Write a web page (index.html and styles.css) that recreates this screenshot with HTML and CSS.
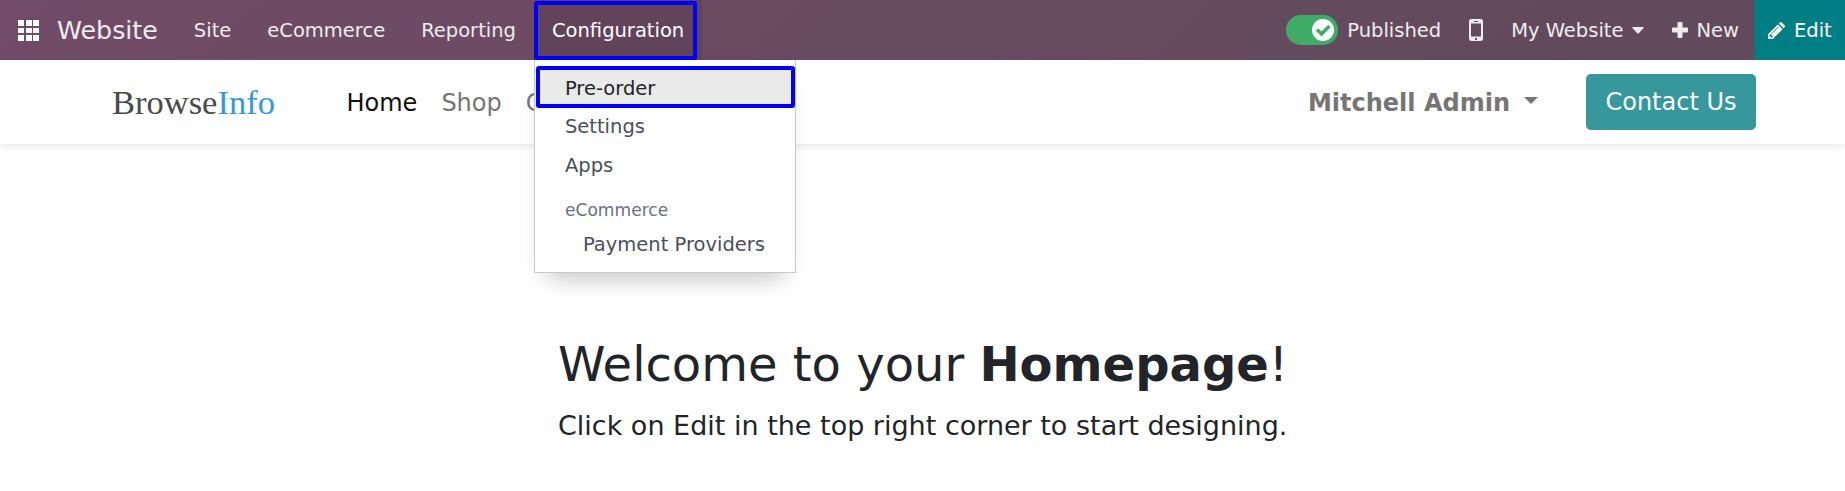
FILE: index.html
```html
<!DOCTYPE html>
<html lang="en">
<head>
<meta charset="utf-8">
<title>Website</title>
<link rel="stylesheet" href="styles.css">
</head>
<body>
<nav class="topbar">
  <svg class="apps" width="21" height="21" viewBox="0 0 21 21" fill="#fff"><path d="M0 0h6v6H0zM8 0h6v6H8zM15 0h6v6h-6zM0 8h6v5H0zM8 8h6v5H8zM15 8h6v5h-6zM0 15h6v6H0zM8 15h6v6H8zM15 15h6v6h-6z"/></svg>
  <span class="brand">Website</span>
  <a class="entry">Site</a>
  <a class="entry">eCommerce</a>
  <a class="entry">Reporting</a>
  <div class="entry open"><span>Configuration</span>
    <i class="mark mark-tab"></i>
    <div class="menu">
      <a class="item active">Pre-order<i class="mark mark-item"></i></a>
      <a class="item">Settings</a>
      <a class="item">Apps</a>
      <div class="group">eCommerce</div>
      <a class="item nested">Payment Providers</a>
    </div>
  </div>
  <div class="systray">
    <span class="switch"><svg width="22" height="22" viewBox="0 0 22 22"><circle cx="11" cy="11" r="11" fill="#fff"/><path d="M5 10.5l4.5 4.5 8-8" fill="none" stroke="#40ad67" stroke-width="3.5"/></svg></span>
    <span class="published">Published</span>
    <svg class="mobile" width="14" height="22" viewBox="0 0 14 22"><path fill="#efecee" fill-rule="evenodd" d="M2.5 0h9Q14 0 14 2.500v17Q14 22 11.500 22h-9Q0 22 0 19.500v-17Q0 0 2.500 0zM2 4.500v13h10v-13zM5 2v1h4V2zM6 19v2h2v-2z"/></svg>
    <span class="site">My Website</span>
    <svg class="caret" width="12" height="7" viewBox="0 0 12 7"><path fill="#efecee" d="M.8 0h10.400q1 0 .4 1L6.700 6.300q-.7.700-1.400 0L.4 1Q-.2 0 .8 0z"/></svg>
    <svg class="plus" width="16" height="16" viewBox="0 0 16 16"><path fill="#efecee" d="M6.500 0h3q1 0 1 1v4.500H15q1 0 1 1v3q0 1-1 1h-4.500V15q0 1-1 1h-3q-1 0-1-1v-4.500H1q-1 0-1-1v-3q0-1 1-1h4.500V1q0-1 1-1z"/></svg>
    <span class="new">New</span>
    <a class="edit"><svg width="17" height="17" viewBox="0 0 17 17"><path fill="#fff" fill-rule="evenodd" d="M0 17v-4.800L9.800 2.400l4.800 4.800L4.800 17zM1.500 13v1.200h1.300v1.300H4l1-1L2.500 12zM3.500 11.200l.5.500 6.300-6.300-.5-.5zM10.800 1.400l.9-.9q1-1 2 0l2.800 2.800q1 1 0 2l-.9.900z"/></svg>Edit</a>
  </div>
</nav>
<header class="header">
  <a class="logo">Browse<span>Info</span></a>
  <a class="link current">Home</a>
  <a class="link">Shop</a>
  <a class="link">C</a>
  <a class="user">Mitchell Admin<svg width="14" height="7" viewBox="0 0 14 7"><path fill="#757575" d="M0 0h14L7 7z"/></svg></a>
  <a class="contact">Contact Us</a>
</header>
<main class="hero">
  <div>
    <h1>Welcome to your <b>Homepage</b>!</h1>
    <p>Click on Edit in the top right corner to start designing.</p>
  </div>
</main>
</body>
</html>
```
FILE: styles.css
```css
* { box-sizing: border-box; }
body {
  margin: 0;
  height: 491px;
  overflow: hidden;
  background: #fff;
  color: #212529;
  font-family: "DejaVu Sans", sans-serif;
  white-space: nowrap;
}
svg { flex: none; }
.topbar {
  position: relative;
  z-index: 2;
  display: flex;
  align-items: center;
  height: 60px;
  padding-left: 18px;
  background: linear-gradient(135deg, #714b67, #5f4a5a);
  color: #efecee;
  font-size: 19.500px;
}
.brand { margin: 0 18px 0 18px; font-size: 25.300px; }
.entry {
  display: flex;
  align-items: center;
  height: 60px;
  padding: 0 18px;
}
.open {
  position: relative;
  width: 168px;
  background: #62445a;
  color: #fff;
}
.mark {
  position: absolute;
  border: 4px solid #0000fe;
  border-radius: 3px;
}
.mark-tab { left: 0; top: 1px; width: 163px; height: 59px; }
.menu {
  position: absolute;
  left: 0;
  top: 60px;
  width: 262px;
  height: 213px;
  padding-top: 9px;
  border: 1px solid #c6c9d4;
  border-top: 0;
  background: #fff;
  color: #4a4f59;
  box-shadow: 0 20px 22px -14px rgba(0, 0, 0, .2), 0 4px 24px rgba(0, 0, 0, .03);
}
.item {
  position: relative;
  display: flex;
  align-items: center;
  height: 38.500px;
  padding-left: 30px;
}
.active { background: #eaeaea; color: #212529; }
.mark-item { left: 1px; top: -3px; width: 259px; height: 42px; }
.group {
  height: 43px;
  padding: 13px 0 0 30px;
  color: #6b7080;
  font-size: 17.100px;
  line-height: 24px;
}
.nested { height: 34px; padding-left: 48px; }
.systray {
  display: flex;
  align-items: center;
  height: 60px;
  margin-left: auto;
}
.switch {
  display: flex;
  align-items: center;
  justify-content: flex-end;
  width: 52px;
  height: 30px;
  padding-right: 4px;
  border-radius: 15px;
  background: #40ad67;
}
.published { margin: 0 28px 0 9px; }
.mobile { margin-right: 28px; }
.caret { margin: 0 28px 0 9px; }
.new { margin: 0 15px 0 8px; }
.edit {
  display: flex;
  align-items: center;
  gap: 9px;
  width: 91px;
  height: 60px;
  padding-left: 14px;
  background: #017e84;
  color: #fff;
}
.header {
  display: flex;
  align-items: center;
  height: 84px;
  padding: 0 89px 0 112px;
  background: #fff;
  box-shadow: 0 2px 8px rgba(0, 0, 0, .1);
  color: #757575;
  font-size: 24px;
}
.logo {
  width: 234.500px;
  color: #4a4a4a;
  font: 34.500px "Liberation Serif", serif;
}
.logo span { color: #3498e0; }
.link { margin-right: 24px; padding-top: 2px; }
.current { color: #121212; }
.user {
  display: flex;
  align-items: center;
  gap: 14px;
  margin: 0 48px 0 auto;
  padding-top: 2px;
  font-weight: bold;
}
.user svg { margin-bottom: 5px; }
.contact {
  width: 170px;
  height: 56px;
  border-radius: 5px;
  background: #36979c;
  color: #fff;
  line-height: 57px;
  text-align: center;
}
.hero { display: flex; justify-content: center; padding: 188px 0 0 1px; }
h1 { margin: 0; font-size: 48px; font-weight: 400; line-height: 64px; }
p { margin: 12px 0 0; font-size: 27px; line-height: 36px; }
```
